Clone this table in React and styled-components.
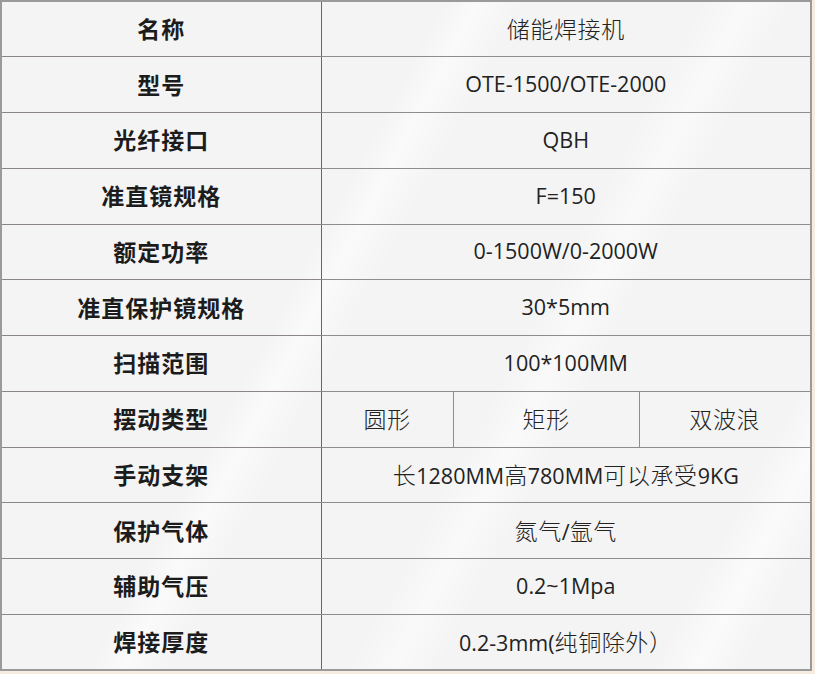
import styled, { createGlobalStyle } from 'styled-components'

const GlobalStyle = createGlobalStyle`
  html, body {
    margin: 0;
    padding: 0;
    background: #f6ecdf;
  }
  body {
    width: 815px;
    height: 674px;
    overflow: hidden;
  }
`

const rows = [
  { label: '名称', value: '储能焊接机' },
  { label: '型号', value: 'OTE-1500/OTE-2000' },
  { label: '光纤接口', value: 'QBH' },
  { label: '准直镜规格', value: 'F=150' },
  { label: '额定功率', value: '0-1500W/0-2000W' },
  { label: '准直保护镜规格', value: '30*5mm' },
  { label: '扫描范围', value: '100*100MM' },
  { label: '摆动类型', parts: ['圆形', '矩形', '双波浪'] },
  { label: '手动支架', value: '长1280MM高780MM可以承受9KG' },
  { label: '保护气体', value: '氮气/氩气' },
  { label: '辅助气压', value: '0.2~1Mpa' },
  { label: '焊接厚度', value: '0.2-3mm(纯铜除外）' },
]

// split mixed text so chinese runs get their own size
function Mixed({ text }) {
  const runs = text.match(/[\u4e00-\u9fff\uff00-\uffef]+|[^\u4e00-\u9fff\uff00-\uffef]+/g)
  return runs.map((r, i) =>
    /[\u4e00-\u9fff\uff00-\uffef]/.test(r) ? <Han key={i}>{r}</Han> : <span key={i}>{r}</span>
  )
}

export default function App() {
  return (
    <>
      <GlobalStyle />
      <Sheet>
        <SpecTable>
          <colgroup>
            <col style={{ width: 320 }} />
            <col style={{ width: 132 }} />
            <col style={{ width: 186 }} />
            <col />
          </colgroup>
          <tbody>
            {rows.map((r) => (
              <Row key={r.label}>
                <Label>{r.label}</Label>
                {r.parts ? (
                  r.parts.map((p) => (
                    <Value key={p}>
                      <Mixed text={p} />
                    </Value>
                  ))
                ) : (
                  <Value colSpan={3}>
                    <Mixed text={r.value} />
                  </Value>
                )}
              </Row>
            ))}
          </tbody>
        </SpecTable>
      </Sheet>
    </>
  )
}

const Sheet = styled.div`
  width: 812px;
  height: 671px;
  background:
    linear-gradient(118deg, transparent 0%, transparent 38%, rgba(255,255,255,0.55) 41%, transparent 45%,
      transparent 60%, rgba(255,255,255,0.5) 64%, transparent 68%, transparent 86%, rgba(255,255,255,0.6) 90%, transparent 94%),
    #f4f4f4;
`

const SpecTable = styled.table`
  width: 812px;
  height: 671px;
  border-collapse: collapse;
  table-layout: fixed;
  border: 2px solid #9a9a9a;
`

const Row = styled.tr`
  height: 55.75px;
`

const Label = styled.td`
  border: 1px solid #8d8686;
  border-right-color: #6e6464;
  text-align: center;
  vertical-align: middle;
  font-family: "Noto Sans CJK SC", sans-serif;
  font-weight: 700;
  font-size: 23px;
  letter-spacing: 1px;
  color: #1c1c1c;
  padding: 0 0 2px;
`

const Value = styled.td`
  border: 1px solid #8d8d8d;
  text-align: center;
  vertical-align: middle;
  font-family: "Open Sans", "Noto Sans CJK SC", sans-serif;
  font-size: 21.5px;
  color: #222;
  padding: 0 0 2px;
  white-space: nowrap;
`

const Han = styled.span`
  font-family: "Noto Sans CJK SC", sans-serif;
  font-size: 23px;
  font-weight: 300;
  letter-spacing: 0.6px;
`
